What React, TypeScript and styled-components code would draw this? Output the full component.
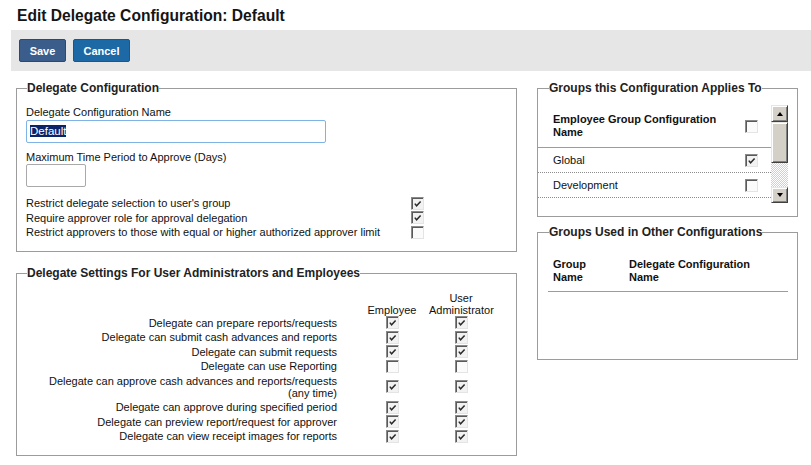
import React from "react";
import styled, { createGlobalStyle } from "styled-components";

const GlobalStyle = createGlobalStyle`
    body {
        margin: 0;
        background: #ffffff;
        color: #111111;
        font-family: "Liberation Sans", Arial, sans-serif;
        font-size: 11px;
    }
`;

const Page = styled.div`
    width: 811px;
`;

const PageTitle = styled.h1`
    margin: 0;
    height: 28px;
    padding: 2px 0 0 17px;
    font-size: 15.6px;
    font-weight: bold;
    line-height: 28px;
    color: #151515;
`;

const Toolbar = styled.div`
    margin-left: 11px;
    height: 41px;
    box-sizing: border-box;
    padding: 9px 8px 0;
    display: flex;
    align-items: flex-start;
    gap: 7px;
    background: #e6e6e6;
`;

const ToolButton = styled.button<{ $variant: "primary" | "secondary" }>`
    height: 23px;
    width: ${(p) => (p.$variant === "primary" ? 47 : 57)}px;
    padding: 0;
    border: 1px solid
        ${(p) => (p.$variant === "primary" ? "#2a4a74" : "#14598f")};
    border-radius: 2px;
    background: ${(p) => (p.$variant === "primary" ? "#3a5d8c" : "#1c69a6")};
    color: #ffffff;
    font-family: inherit;
    font-size: 11px;
    font-weight: bold;
    cursor: pointer;
`;

const Main = styled.div`
    display: flex;
    gap: 20px;
    padding: 10px 0 0 16px;
`;

const Column = styled.div<{ $width: number; $gap: number }>`
    width: ${(p) => p.$width}px;
    display: flex;
    flex-direction: column;
    gap: ${(p) => p.$gap}px;
`;

const Panel = styled.fieldset<{ $pad: string }>`
    margin: 0;
    min-width: 0;
    border: 1px solid #9c9c9c;
    padding: ${(p) => p.$pad};
`;

const PanelLegend = styled.legend<{ $offset: number }>`
    margin-left: ${(p) => p.$offset}px;
    padding: 0;
    font-size: 12px;
    font-weight: bold;
    line-height: 15px;
    color: #222222;
`;

const FieldLabel = styled.div<{ $top: number }>`
    margin-top: ${(p) => p.$top}px;
    line-height: 14px;
`;

const TextBox = styled.div<{ $width: number; $focused?: boolean }>`
    width: ${(p) => p.$width}px;
    height: 23px;
    box-sizing: border-box;
    margin-top: ${(p) => (p.$focused ? 1 : 0)}px;
    padding: 3px;
    border: 1px solid ${(p) => (p.$focused ? "#7fb3e6" : "#a9a9a9")};
    border-radius: 2px;
    background: #ffffff;
    font-size: 11.5px;
    line-height: 15px;
`;

const Selected = styled.span`
    background: #0a246a;
    color: #ffffff;
`;

const OptionList = styled.div`
    margin-top: 9px;
    display: grid;
    grid-template-columns: 385px 13px;
    grid-auto-rows: 14.5px;
    align-items: center;
`;

const OptionText = styled.span`
    line-height: 12px;
    white-space: nowrap;
`;

const Box = styled.span<{ $checked: boolean }>`
    display: inline-block;
    width: 13px;
    height: 13px;
    box-sizing: border-box;
    border: 1px solid;
    border-color: #8a8a8a #e4e4e4 #e4e4e4 #8a8a8a;
    box-shadow: inset 1px 1px #5a5a5a;
    background: ${(p) => (p.$checked ? "#f2f2f2" : "#fbfbfb")};
    position: relative;
    svg {
        position: absolute;
        left: 1px;
        top: 1px;
    }
`;

const CheckBox = ({ checked }: { checked: boolean }) => (
    <Box $checked={checked}>
        {checked && (
            <svg width="10" height="10" viewBox="0 0 10 10">
                <polyline
                    points="1.8,4.6 3.6,6.8 7.6,2.6"
                    fill="none"
                    stroke="#2a2a2a"
                    strokeWidth="1.5"
                />
            </svg>
        )}
    </Box>
);

const RightsGrid = styled.div`
    margin: 11px 0 0 20px;
    display: grid;
    grid-template-columns: 309px 74px 64px;
    grid-template-rows: 24px repeat(4, 14.5px) 26.5px repeat(3, 14.5px);
    line-height: 12px;
`;

const RightsHead = styled.div`
    align-self: end;
    text-align: center;
`;

const RightsLabel = styled.div`
    align-self: center;
    padding-right: 18px;
    text-align: right;
`;

const RightsCell = styled.div`
    display: flex;
    align-items: center;
    justify-content: center;
`;

const ListFrame = styled.div`
    margin-top: 9px;
    height: 98px;
    display: flex;
`;

const ListBody = styled.div`
    flex: 1;
    overflow: hidden;
`;

const ListRow = styled.div<{ $head?: boolean }>`
    height: ${(p) => (p.$head ? 42 : 24)}px;
    display: grid;
    grid-template-columns: 1fr 26px;
    align-items: center;
    border-bottom: 1px ${(p) => (p.$head ? "solid #9c9c9c" : "dotted #8c8c8c")};
    font-weight: ${(p) => (p.$head ? "bold" : "normal")};
    line-height: 13px;
`;

const ListName = styled.div`
    padding: 0 20px 0 15px;
`;

const ScrollBar = styled.div`
    width: 17px;
    display: flex;
    flex-direction: column;
    background: repeating-conic-gradient(#d4d0c8 0 25%, #ffffff 0 50%) 0 0 / 2px 2px;
`;

const ScrollPart = styled.div<{ $height: number }>`
    height: ${(p) => p.$height}px;
    box-sizing: border-box;
    display: flex;
    align-items: center;
    justify-content: center;
    border: 1px solid;
    border-color: #e8e6e0 #404040 #404040 #e8e6e0;
    box-shadow: inset 1px 1px #ffffff, inset -1px -1px #808080;
    background: #d4d0c8;
`;

const ScrollTrack = styled.div`
    flex: 1;
`;

const Arrow = styled.span<{ $up?: boolean }>`
    width: 0;
    height: 0;
    border-left: 3.5px solid transparent;
    border-right: 3.5px solid transparent;
    ${(p) =>
        p.$up
            ? "border-bottom: 4px solid #000000;"
            : "border-top: 4px solid #000000;"}
`;

const UsedHead = styled.div`
    margin-top: 11px;
    height: 40px;
    display: grid;
    grid-template-columns: 76px 1fr;
    align-items: center;
    border-bottom: 1px solid #9c9c9c;
    font-weight: bold;
    line-height: 13px;
`;

const UsedHeadCell = styled.div<{ $max: number }>`
    padding-left: 5px;
    max-width: ${(p) => p.$max}px;
`;

const UsedBody = styled.div`
    height: 56px;
`;

const options = [
    { label: "Restrict delegate selection to user's group", checked: true },
    { label: "Require approver role for approval delegation", checked: true },
    {
        label: "Restrict approvers to those with equal or higher authorized approver limit",
        checked: false,
    },
];

const rights = [
    { label: "Delegate can prepare reports/requests", on: true },
    { label: "Delegate can submit cash advances and reports", on: true },
    { label: "Delegate can submit requests", on: true },
    { label: "Delegate can use Reporting", on: false },
    {
        label: "Delegate can approve cash advances and reports/requests (any time)",
        on: true,
    },
    { label: "Delegate can approve during specified period", on: true },
    { label: "Delegate can preview report/request for approver", on: true },
    { label: "Delegate can view receipt images for reports", on: true },
];

const groups = [
    { name: "Global", checked: true },
    { name: "Development", checked: false },
];

const App = () => {
    return (
        <Page>
            <GlobalStyle />
            <PageTitle>Edit Delegate Configuration: Default</PageTitle>
            <Toolbar>
                <ToolButton $variant="primary">Save</ToolButton>
                <ToolButton $variant="secondary">Cancel</ToolButton>
            </Toolbar>
            <Main>
                <Column $width={501} $gap={14}>
                    <Panel $pad="0 9px 11px">
                        <PanelLegend $offset={1}>Delegate Configuration</PanelLegend>
                        <FieldLabel $top={9}>Delegate Configuration Name</FieldLabel>
                        <TextBox $width={300} $focused>
                            <Selected>Default</Selected>
                        </TextBox>
                        <FieldLabel $top={7}>
                            Maximum Time Period to Approve (Days)
                        </FieldLabel>
                        <TextBox $width={60} />
                        <OptionList>
                            {options.map((option) => (
                                <React.Fragment key={option.label}>
                                    <OptionText>{option.label}</OptionText>
                                    <CheckBox checked={option.checked} />
                                </React.Fragment>
                            ))}
                        </OptionList>
                    </Panel>
                    <Panel $pad="0 9px 11px">
                        <PanelLegend $offset={1}>
                            Delegate Settings For User Administrators and Employees
                        </PanelLegend>
                        <RightsGrid>
                            <div />
                            <RightsHead>Employee</RightsHead>
                            <RightsHead>
                                User
                                <br />
                                Administrator
                            </RightsHead>
                            {rights.map((right) => (
                                <React.Fragment key={right.label}>
                                    <RightsLabel>{right.label}</RightsLabel>
                                    <RightsCell>
                                        <CheckBox checked={right.on} />
                                    </RightsCell>
                                    <RightsCell>
                                        <CheckBox checked={right.on} />
                                    </RightsCell>
                                </React.Fragment>
                            ))}
                        </RightsGrid>
                    </Panel>
                </Column>
                <Column $width={261} $gap={8}>
                    <Panel $pad="0 9px 13px 0">
                        <PanelLegend $offset={11}>
                            Groups this Configuration Applies To
                        </PanelLegend>
                        <ListFrame>
                            <ListBody>
                                <ListRow $head>
                                    <ListName>Employee Group Configuration Name</ListName>
                                    <CheckBox checked={false} />
                                </ListRow>
                                {groups.map((group) => (
                                    <ListRow key={group.name}>
                                        <ListName>{group.name}</ListName>
                                        <CheckBox checked={group.checked} />
                                    </ListRow>
                                ))}
                            </ListBody>
                            <ScrollBar>
                                <ScrollPart $height={17}>
                                    <Arrow $up />
                                </ScrollPart>
                                <ScrollPart $height={41} />
                                <ScrollTrack />
                                <ScrollPart $height={16}>
                                    <Arrow />
                                </ScrollPart>
                            </ScrollBar>
                        </ListFrame>
                    </Panel>
                    <Panel $pad="0 9px 11px 10px">
                        <PanelLegend $offset={1}>
                            Groups Used in Other Configurations
                        </PanelLegend>
                        <UsedHead>
                            <UsedHeadCell $max={50}>Group Name</UsedHeadCell>
                            <UsedHeadCell $max={130}>
                                Delegate Configuration Name
                            </UsedHeadCell>
                        </UsedHead>
                        <UsedBody />
                    </Panel>
                </Column>
            </Main>
        </Page>
    );
};

export default App;
